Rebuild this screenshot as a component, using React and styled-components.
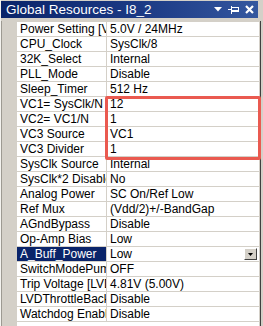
import React from 'react';
import styled, { createGlobalStyle } from 'styled-components';

const rows = [
  ['Power Setting [Vcc / SysClk freq]', '5.0V / 24MHz'],
  ['CPU_Clock', 'SysClk/8'],
  ['32K_Select', 'Internal'],
  ['PLL_Mode', 'Disable'],
  ['Sleep_Timer', '512 Hz'],
  ['VC1= SysClk/N', '12'],
  ['VC2= VC1/N', '1'],
  ['VC3 Source', 'VC1'],
  ['VC3 Divider', '1'],
  ['SysClk Source', 'Internal'],
  ['SysClk*2 Disable', 'No'],
  ['Analog Power', 'SC On/Ref Low'],
  ['Ref Mux', '(Vdd/2)+/-BandGap'],
  ['AGndBypass', 'Disable'],
  ['Op-Amp Bias', 'Low'],
  ['A_Buff_Power', 'Low', true],
  ['SwitchModePump', 'OFF'],
  ['Trip Voltage [LVD (SMP)]', '4.81V (5.00V)'],
  ['LVDThrottleBack', 'Disable'],
  ['Watchdog Enable', 'Disable'],
];

const GlobalStyle = createGlobalStyle`
  html, body {
    margin: 0;
    padding: 0;
    background: #ffffff;
  }
  body {
    font-family: "Liberation Sans", Arial, sans-serif;
  }
`;

const Panel = styled.div`
  position: relative;
  width: 263px;
  height: 326px;
  box-sizing: border-box;
  background: #d4d0c8;
  border-left: 1px solid #f4f3ef;
  padding-top: 1px;
  display: flex;
  flex-direction: column;
  overflow: hidden;
`;

const TitleBar = styled.div`
  height: 17px;
  width: 257px;
  display: flex;
  align-items: center;
  justify-content: space-between;
  background: linear-gradient(to right, #0a246a 0%, #1c3a85 55%, #34579f 100%);
  color: #ffffff;
  font-size: 13.5px;
  padding: 0 0 0 5px;
  box-sizing: border-box;
`;

const Title = styled.span`
  white-space: nowrap;
  line-height: 17px;
`;

const Buttons = styled.div`
  display: flex;
  align-items: center;
  gap: 6px;
  padding-right: 4px;
`;

const Body = styled.div`
  display: flex;
  margin-top: 3px;
  flex: 1;
`;

const Gutter = styled.div`
  width: 15px;
  border-left: 1px solid #9d9a92;
  background: #d4d0c8;
`;

const Sheet = styled.div`
  width: 242px;
  background: #ffffff;
  display: flex;
  flex-direction: column;
  border-top: 1px solid #d4d0c8;
`;

const RightEdge = styled.div`
  width: 1px;
  margin-left: 1px;
  background: #404040;
`;

const Row = styled.div`
  display: grid;
  grid-template-columns: 90px 1fr;
  height: 15px;
  font-size: 12px;
  line-height: 14px;
  color: #000000;
`;

const Cell = styled.div`
  position: relative;
  overflow: hidden;
  white-space: nowrap;
  border-bottom: 1px solid #d4d0c8;
  padding-left: 3px;
  border-right: ${p => (p.$name ? '1px solid #d4d0c8' : 'none')};
  background: ${p => (p.$selected ? '#0a246a' : '#ffffff')};
  color: ${p => (p.$selected ? '#ffffff' : '#000000')};
`;

const DropButton = styled.div`
  position: absolute;
  right: 2px;
  top: 1px;
  width: 13px;
  height: 12px;
  box-sizing: border-box;
  background: #d4d0c8;
  border-top: 1px solid #ffffff;
  border-left: 1px solid #ffffff;
  border-right: 1px solid #404040;
  border-bottom: 1px solid #404040;
  display: flex;
  align-items: center;
  justify-content: center;
`;

const Highlight = styled.div`
  position: absolute;
  left: 104px;
  top: 96px;
  width: 156px;
  height: 64px;
  box-sizing: border-box;
  border: 3px solid #ea5a50;
  border-radius: 2px;
  pointer-events: none;
`;

const App = () => {
  return (
    <>
      <GlobalStyle />
      <Panel>
        <TitleBar>
          <Title>Global Resources - I8_2</Title>
          <Buttons>
            <svg width="8" height="5" viewBox="0 0 8 5">
              <polygon points="0,0 8,0 4,4.5" fill="#fff" />
            </svg>
            <svg width="11" height="8" viewBox="0 0 11 8" shapeRendering="crispEdges">
              <rect x="0" y="3" width="3" height="1" fill="#fff" />
              <rect x="3" y="0" width="1" height="8" fill="#fff" />
              <rect x="4" y="1" width="7" height="1" fill="#fff" />
              <rect x="4" y="4" width="7" height="2" fill="#fff" />
              <rect x="10" y="1" width="1" height="5" fill="#fff" />
            </svg>
            <svg width="9" height="9" viewBox="0 0 9 9">
              <path d="M1 1 L8 8 M8 1 L1 8" stroke="#fff" strokeWidth="2.2" />
            </svg>
          </Buttons>
        </TitleBar>
        <Body>
          <Gutter />
          <Sheet>
            {rows.map(([name, value, selected]) => (
              <Row key={name}>
                <Cell $name $selected={selected}>{name}</Cell>
                <Cell>
                  {value}
                  {selected && (
                    <DropButton>
                      <svg width="5" height="3" viewBox="0 0 5 3">
                        <polygon points="0,0 5,0 2.5,3" fill="#000" />
                      </svg>
                    </DropButton>
                  )}
                </Cell>
              </Row>
            ))}
          </Sheet>
          <RightEdge />
        </Body>
        <Highlight />
      </Panel>
    </>
  );
};

export default App;
